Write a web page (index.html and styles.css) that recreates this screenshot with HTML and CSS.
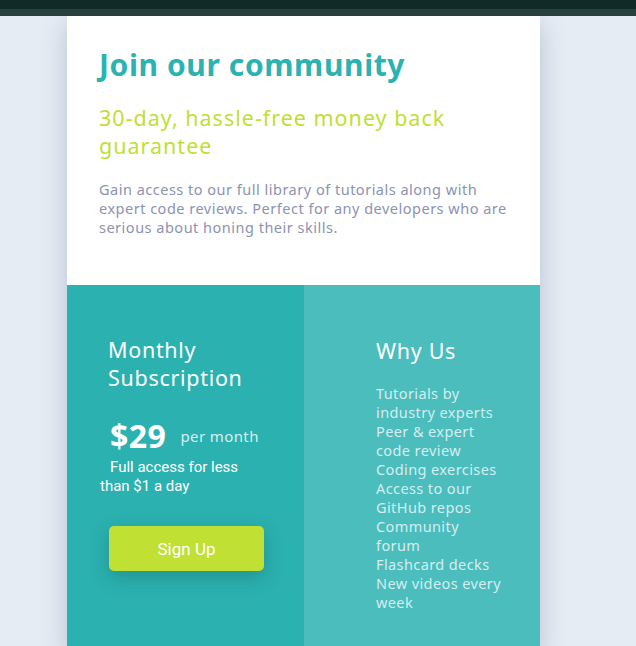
FILE: index.html
```html
<!DOCTYPE html>
<html lang="en">
<head>
<meta charset="utf-8">
<title>Single price grid</title>
<link rel="stylesheet" href="styles.css">
</head>
<body>
<div class="topbar"><div class="topbar-dark"></div><div class="topbar-light"></div></div>
<main class="card">
  <section class="intro">
    <h1 class="title">Join our community</h1>
    <h2 class="subtitle">30-day, hassle-free money back guarantee</h2>
    <p class="desc">Gain access to our full library of tutorials along with expert code reviews. Perfect for any developers who are serious about honing their skills.</p>
  </section>
  <div class="bottom">
    <section class="sub">
      <h3 class="sub-title">Monthly Subscription</h3>
      <div class="price"><span class="amount">$29</span><span class="per">per month</span></div>
      <p class="access">Full access for less than $1 a day</p>
      <button class="signup">Sign Up</button>
    </section>
    <section class="why">
      <h3 class="why-title">Why Us</h3>
      <ul class="why-list">
        <li>Tutorials by industry experts</li>
        <li>Peer &amp; expert code review</li>
        <li>Coding exercises</li>
        <li>Access to our GitHub repos</li>
        <li>Community forum</li>
        <li>Flashcard decks</li>
        <li>New videos every week</li>
      </ul>
    </section>
  </div>
</main>
</body>
</html>
```
FILE: styles.css
```css
* { box-sizing: border-box; }
html, body { margin: 0; padding: 0; }
body {
  background: #e5ecf4;
  font-family: "Noto Sans", "Open Sans", sans-serif;
  overflow: hidden;
}
.topbar { height: 16px; display: flex; flex-direction: column; }
.topbar-dark { height: 9px; background: #112a27; }
.topbar-light { height: 7px; background: #26403c; }
.card {
  margin-left: 67px;
  width: 473px;
  background: #fff;
  box-shadow: 0 8px 24px rgba(80, 100, 130, 0.3);
}
.intro { padding: 30px 32px 48px 32px; }
.title {
  margin: 0;
  font-size: 30px;
  font-weight: 700;
  letter-spacing: 0.6px;
  color: #2bb3b1;
  line-height: 38px;
}
.subtitle {
  margin: 20px 0 0;
  font-size: 21.5px;
  font-weight: 400;
  letter-spacing: 1px;
  color: #c0df34;
  line-height: 28px;
}
.desc {
  margin: 20px 0 0;
  font-size: 14.5px;
  letter-spacing: 0.5px;
  line-height: 19px;
  color: #8b93b3;
}
.bottom { display: flex; }
.sub {
  width: 237px;
  background: #2bb1b0;
  padding: 51px 0 80px 41px;
  color: #fff;
}
.sub-title {
  margin: 0;
  font-size: 21.5px;
  font-weight: 400;
  letter-spacing: 0.7px;
  line-height: 28px;
}
.price { display: flex; align-items: center; margin-top: 24px; padding-left: 2px; gap: 14px; }
.amount { font-size: 32px; font-weight: 700; line-height: 40px; letter-spacing: 0.5px; }
.per { font-size: 15px; color: #d6eff0; letter-spacing: 0.4px; }
.access {
  margin: 2px 0 0 -8px;
  width: 170px;
  text-indent: 10px;
  font-family: Roboto, "Liberation Sans", sans-serif;
  font-size: 15px;
  line-height: 19px;
}
.signup {
  display: block;
  margin: 30px 0 0 1px;
  width: 155px;
  height: 45px;
  border: none;
  border-radius: 5px;
  background: #c0e033;
  color: #fff;
  font-family: Roboto, "Liberation Sans", sans-serif;
  font-size: 17px;
  box-shadow: 0 6px 18px rgba(20, 90, 90, 0.35);
}
.why {
  flex: 1;
  background: #4bbdbd;
  padding: 52px 0 0 72px;
  color: #fff;
}
.why-title {
  margin: 0;
  font-size: 21.5px;
  font-weight: 400;
  letter-spacing: 0.7px;
  line-height: 28px;
}
.why-list {
  list-style: none;
  margin: 19px 0 0;
  padding: 0;
  width: 128px;
  font-size: 14.5px;
  letter-spacing: 0.4px;
  line-height: 19px;
  color: #d4eef0;
}
```
